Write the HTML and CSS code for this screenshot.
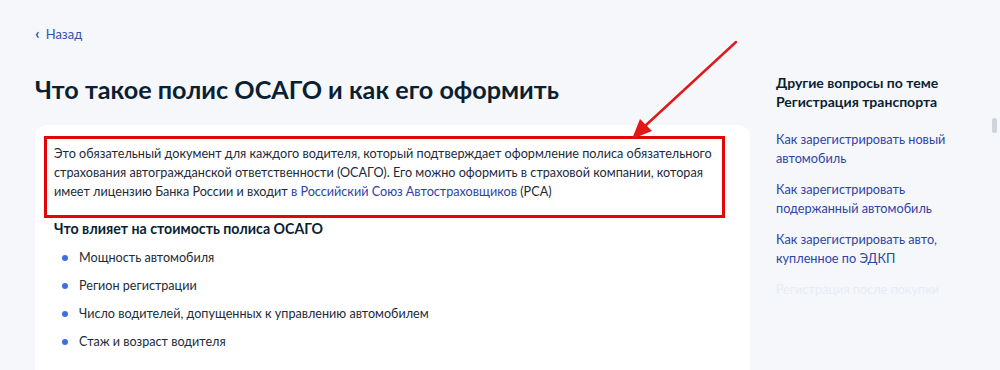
FILE: index.html
```html
<!DOCTYPE html>
<html>
<head>
    <meta charset="utf-8">
    <title>Что такое полис ОСАГО</title>
    <link rel="stylesheet" href="styles.css">
</head>
<body>
    <div class="page">
        <a class="back" href="#"><span class="chev">‹</span>Назад</a>

        <div class="layout">
            <div class="main">
                <h1>Что такое полис ОСАГО и как его оформить</h1>

                <div class="card">
                    <div class="mark">
                        <p>Это обязательный документ для каждого водителя, который подтверждает оформление полиса обязательного страхования автогражданской ответственности (ОСАГО). Его можно оформить в страховой компании, которая имеет лицензию Банка России и входит <a href="#">в Российский Союз Автостраховщиков</a> (РСА)</p>
                    </div>

                    <h3>Что влияет на стоимость полиса ОСАГО</h3>
                    <ul class="factors">
                        <li>Мощность автомобиля</li>
                        <li>Регион регистрации</li>
                        <li>Число водителей, допущенных к управлению автомобилем</li>
                        <li>Стаж и возраст водителя</li>
                    </ul>
                </div>
            </div>

            <aside class="side">
                <h4>Другие вопросы по теме Регистрация транспорта</h4>
                <div class="links">
                    <a href="#">Как зарегистрировать новый автомобиль</a>
                    <a href="#">Как зарегистрировать подержанный автомобиль</a>
                    <a href="#">Как зарегистрировать авто, купленное по ЭДКП</a>
                    <a href="#" class="faded">Регистрация после покупки</a>
                </div>
            </aside>
        </div>
    </div>

    <!-- стрелка-указатель -->
    <svg class="arrow" width="1000" height="370" viewBox="0 0 1000 370">
        <line x1="736" y1="42" x2="645" y2="126" stroke="#e01818" stroke-width="2.4" stroke-linecap="round"/>
        <polygon points="632,139 640,119 652,131" fill="#e01818"/>
    </svg>

    <div class="scroll-thumb"></div>
</body>
</html>
```

FILE: styles.css
```css
body {
    margin: 0;
    background-color: #f5f7fb;
    font-family: Lato, "Noto Sans", Arial, sans-serif;
    color: #0b1f33;
    position: relative;
    height: 370px;
    overflow: hidden;
}
a {
    color: #2d44a6;
    text-decoration: none;
}
.page {
    padding: 24px 0 0 35px;
}
.back {
    display: inline-flex;
    align-items: center;
    font-size: 13px;
    color: #3450b4;
}
.chev {
    font-size: 16px;
    font-weight: bold;
    margin-right: 6px;
    line-height: 16px;
    position: relative;
    top: -1px;
}
.layout {
    display: grid;
    grid-template-columns: 715px 190px;
    column-gap: 26px;
    margin-top: 29px;
}
h1 {
    margin: 0;
    font-size: 25.2px;
    line-height: 34px;
    font-weight: 700;
    color: #0b1f33;
}
.card {
    background: #fff;
    border-radius: 12px;
    margin-top: 19px;
    padding: 11px 25px 20px 9px;
    min-height: 260px;
}
.mark {
    border: 3px solid #e3050a;
    padding: 5px 1px 14px 7px;
}
.mark p {
    margin: 0;
    font-size: 12.65px;
    line-height: 19px;
    color: #1c2b3a;
}
.card h3 {
    margin: 1px 0 0 10px;
    font-size: 14.2px;
    line-height: 20px;
    font-weight: 700;
    color: #0b1f33;
}
.factors {
    list-style: none;
    margin: 5px 0 0 10px;
    padding: 0;
}
.factors li {
    position: relative;
    padding-left: 25px;
    font-size: 12.6px;
    line-height: 28px;
    color: #1c2b3a;
}
.factors li::before {
    content: "";
    position: absolute;
    left: 8px;
    top: 11px;
    width: 6px;
    height: 6px;
    border-radius: 50%;
    background: #3d6fe0;
}
.side {
    padding-top: 1px;
}
.side h4 {
    margin: 0;
    font-size: 14px;
    line-height: 19px;
    font-weight: 700;
    color: #0b1f33;
}
.links {
    display: flex;
    flex-direction: column;
    gap: 12px;
    margin-top: 19px;
}
.links a {
    font-size: 12.7px;
    line-height: 19px;
    color: #2d44a6;
}
.faded {
    opacity: 0.06;
    white-space: nowrap;
}
.arrow {
    position: absolute;
    left: 0;
    top: 0;
    pointer-events: none;
}
.scroll-thumb {
    position: absolute;
    left: 992px;
    top: 118px;
    width: 5px;
    height: 15px;
    border-radius: 3px;
    background: #cfd3da;
}
```
